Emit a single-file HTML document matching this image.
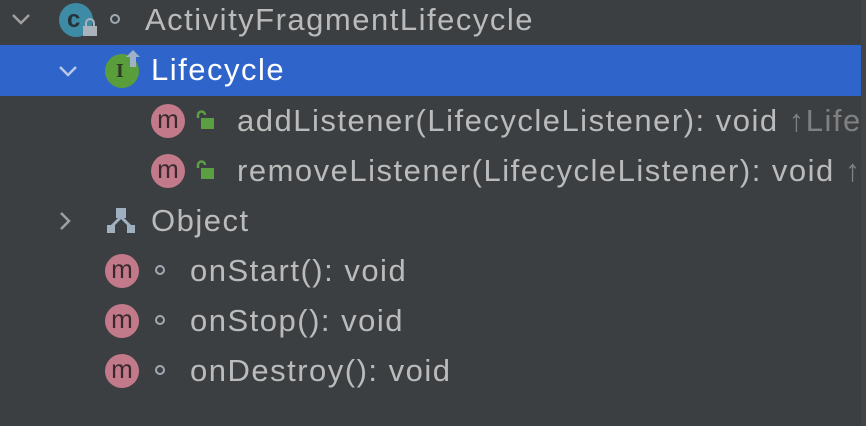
<!DOCTYPE html>
<html><head><style>
body{margin:0;width:866px;height:426px;background:#3c3f41;overflow:hidden;position:relative;font-family:"Liberation Sans",sans-serif;color:#bbbbbb;font-size:31px;letter-spacing:1.5px}
.r{position:absolute;left:0;width:866px;height:50px;overflow:hidden}
.t{position:absolute;top:0;line-height:50px;white-space:nowrap}
.sel{background:#2f65ca}
.m{position:absolute;width:34px;height:34px;border-radius:50%;background:#c27a8a;color:#3a2a2e;font-size:26px;letter-spacing:0;line-height:30px;text-align:center;top:8px}
.dot{position:absolute;width:6px;height:6px;border:2.5px solid #a0aab3;border-radius:50%;top:19px}
.gr{color:#808080}
svg{position:absolute}
.sb{position:absolute;right:0;top:0;width:5px;height:426px;background:#424547}
</style></head><body>
<div class="r" style="top:-5px">
<svg style="left:10px;top:17px" width="22" height="14"><path d="M3 3 L11 11 L19 3" stroke="#a0a0a0" stroke-width="2.5" fill="none"/></svg>
<div style="position:absolute;left:59px;top:8px;width:34px;height:34px;border-radius:50%;background:#3e8ba5"></div>
<div style="position:absolute;left:67px;top:8px;line-height:34px;font-size:24px;color:#253338;font-weight:bold;letter-spacing:0">c</div>
<svg style="left:82px;top:22px" width="16" height="20"><path d="M4 9 V6 a4 4 0 0 1 8 0 V9" stroke="#aab3bb" stroke-width="2" fill="none"/><rect x="1" y="9" width="14" height="10" fill="#aab3bb"/></svg>
<div class="dot" style="left:110px"></div>
<div class="t" style="left:145px">ActivityFragmentLifecycle</div>
</div>
<div class="r sel" style="top:45px;height:51px">
<svg style="left:57px;top:19px" width="22" height="14"><path d="M3 3 L11 11 L19 3" stroke="#b9c7e8" stroke-width="2.5" fill="none"/></svg>
<div style="position:absolute;left:105px;top:9px;width:34px;height:34px;border-radius:50%;background:#5a9e3c"></div>
<div style="position:absolute;left:116px;top:9px;line-height:34px;font-size:20px;color:#2d3a24;font-family:'Liberation Serif',serif;font-weight:bold;letter-spacing:0">I</div>
<svg style="left:124px;top:4px" width="18" height="20"><path d="M9 1 L16 8 H12 V18 H6 V8 H2 Z" fill="#9fb1c8"/></svg>
<div class="t" style="left:151px;color:#fff">Lifecycle</div>
</div>
<div class="r" style="top:96px">
<div class="m" style="left:151px">m</div>
<svg style="left:195px;top:14px" width="22" height="20"><path d="M3 8 V5 a3.5 3.5 0 0 1 7 0" stroke="#5aa043" stroke-width="2.5" fill="none"/><rect x="6" y="8" width="13" height="11" fill="#5aa043"/></svg>
<div class="t" style="left:237px">addListener(LifecycleListener): void <span class="gr">↑Lifecycle</span></div>
</div>
<div class="r" style="top:146px">
<div class="m" style="left:151px">m</div>
<svg style="left:195px;top:14px" width="22" height="20"><path d="M3 8 V5 a3.5 3.5 0 0 1 7 0" stroke="#5aa043" stroke-width="2.5" fill="none"/><rect x="6" y="8" width="13" height="11" fill="#5aa043"/></svg>
<div class="t" style="left:237px">removeListener(LifecycleListener): void <span class="gr">↑Lifecycle</span></div>
</div>
<div class="r" style="top:196px">
<svg style="left:58px;top:14px" width="14" height="22"><path d="M3 3 L11 11 L3 19" stroke="#a0a0a0" stroke-width="2.5" fill="none"/></svg>
<svg style="left:106px;top:11px" width="30" height="28"><rect x="10" y="1" width="10" height="10" fill="#9fb1c0"/><path d="M15 10 L5 20 M15 10 L25 20" stroke="#9fb1c0" stroke-width="3"/><rect x="1" y="18" width="8" height="8" fill="#9fb1c0"/><rect x="21" y="18" width="8" height="8" fill="#9fb1c0"/></svg>
<div class="t" style="left:151px">Object</div>
</div>
<div class="r" style="top:246px">
<div class="m" style="left:105px">m</div>
<div class="dot" style="left:155px"></div>
<div class="t" style="left:190px">onStart(): void</div>
</div>
<div class="r" style="top:296px">
<div class="m" style="left:105px">m</div>
<div class="dot" style="left:155px"></div>
<div class="t" style="left:190px">onStop(): void</div>
</div>
<div class="r" style="top:346px">
<div class="m" style="left:105px">m</div>
<div class="dot" style="left:155px"></div>
<div class="t" style="left:190px">onDestroy(): void</div>
</div>
<div class="sb"></div>
</body></html>
